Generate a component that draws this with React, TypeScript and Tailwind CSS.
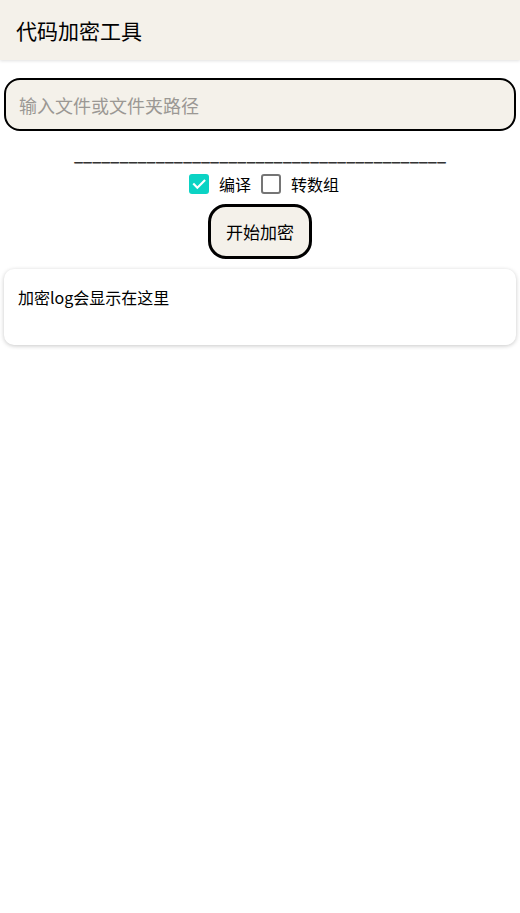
import { useState } from "react";

const font = { fontFamily: '"Noto Sans CJK SC", "Noto Sans", sans-serif' };

function Check({ checked, onClick }: { checked: boolean; onClick: () => void }) {
  if (checked) {
    return (
      <button onClick={onClick} className="w-5 h-5 rounded-[3px] bg-[#0bd3c4] flex items-center justify-center">
        <svg viewBox="0 0 24 24" className="w-4 h-4" fill="none" stroke="white" strokeWidth={3.2} strokeLinecap="square">
          <path d="M4.5 12.5l5 5L20 7" />
        </svg>
      </button>
    );
  }
  return <button onClick={onClick} className="w-5 h-5 rounded-[3px] border-2 border-[#757575] bg-white" />;
}

export default function App() {
  const [path, setPath] = useState("");
  const [compile, setCompile] = useState(true);
  const [toArray, setToArray] = useState(false);

  return (
    <div className="min-h-screen bg-white text-black" style={font}>
      <header className="h-[60px] bg-[#f4f1ea] flex items-center px-4 shadow-[0_1px_3px_rgba(0,0,0,0.12)]">
        <h1 className="text-[21px] leading-none">代码加密工具</h1>
      </header>

      <div className="px-1 pt-[18px]">
        <input
          value={path}
          onChange={(e) => setPath(e.target.value)}
          placeholder="输入文件或文件夹路径"
          className="w-full h-[53px] rounded-[16px] border-2 border-black bg-[#f4f1ea] px-[13px] text-[18px] placeholder:text-[#9b9894] outline-none"
        />

        <div className="flex justify-center mt-[12px] h-[22px] text-[16px] leading-[22px] text-[#333] font-bold">
          _________________________________________
        </div>

        <div className="flex items-center justify-center gap-[10px] mt-[8px] h-[22px] text-[16px] pl-2">
          <Check checked={compile} onClick={() => setCompile(!compile)} />
          <span>编译</span>
          <Check checked={toArray} onClick={() => setToArray(!toArray)} />
          <span>转数组</span>
        </div>

        <div className="flex justify-center mt-[9px]">
          <button className="w-[104px] h-[55px] rounded-[18px] border-[3px] border-black bg-[#f4f1ea] text-[17px]">
            开始加密
          </button>
        </div>

        <div className="mt-[10px] rounded-[10px] bg-white shadow-[0_1px_4px_rgba(0,0,0,0.22)] h-[76px] px-[14px] pt-[16px] text-[16px]">
          加密log会显示在这里
        </div>
      </div>
    </div>
  );
}
